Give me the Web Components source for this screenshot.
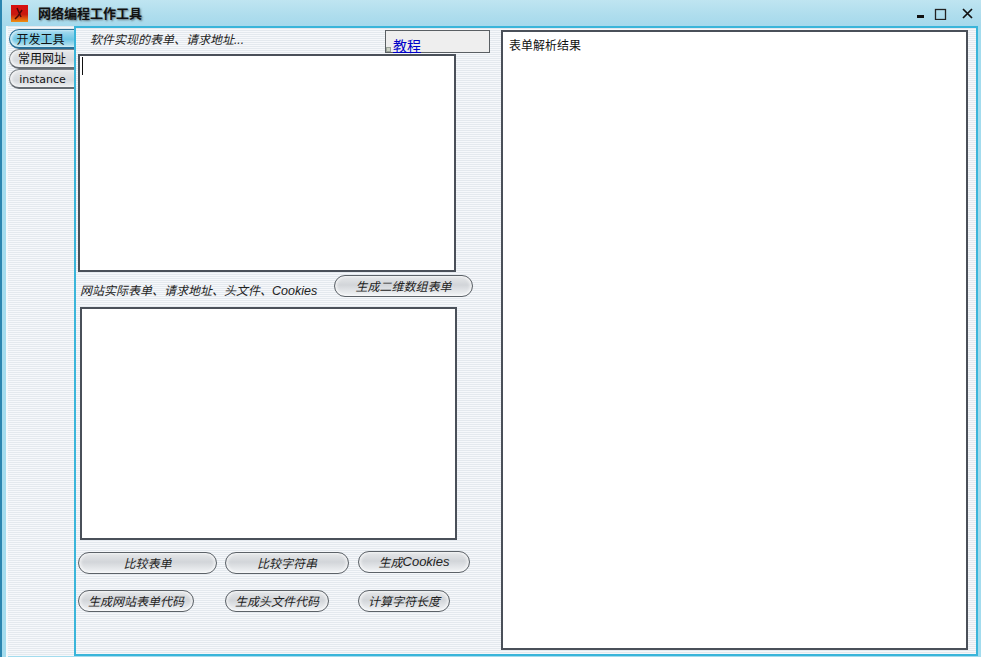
<!DOCTYPE html>
<html>
<head>
<meta charset="utf-8">
<title>网络编程工作工具</title>
<style>
    html, body { margin: 0; padding: 0; height: 100%; overflow: hidden; }
    body { font: 12px "Liberation Sans", "Noto Sans CJK SC", sans-serif; color: #111; }
</style>
</head>
<body>
<app-window>
    <title-bar slot="title">网络编程工作工具</title-bar>
    <side-tabs slot="tabs">
        <tab-item active>开发工具</tab-item>
        <tab-item>常用网址</tab-item>
        <tab-item latin>instance</tab-item>
    </side-tabs>
    <tool-panel slot="panel"></tool-panel>
</app-window>

<script>
class AppWindow extends HTMLElement {
    connectedCallback() {
        this.attachShadow({ mode: 'open' });
        this.shadowRoot.innerHTML = `
            <style>
                :host {
                    display: flex;
                    flex-direction: column;
                    width: 981px;
                    height: 657px;
                    box-sizing: border-box;
                    border-left: 2px solid #2b86b0;
                    background: repeating-linear-gradient(180deg, #e4e9ee 0, #e4e9ee 1px, #f6f8fb 1px, #f6f8fb 2px);
                }
                .body {
                    flex: 1;
                    display: flex;
                    min-height: 0;
                    padding: 0 3px 1px 7px;
                    box-shadow: inset 4px 0 0 #a3dcee, inset 6px 0 0 #f4f9fb, inset -3px 0 0 #a3dcee, inset 0 -1px 0 #a3dcee;
                }
                .tabs { width: 65px; flex: none; padding-top: 3px; }
                .panel { flex: 1; min-width: 0; }
            </style>
            <slot name="title"></slot>
            <div class="body">
                <div class="tabs"><slot name="tabs"></slot></div>
                <div class="panel"><slot name="panel"></slot></div>
            </div>
        `;
    }
}

class TitleBar extends HTMLElement {
    connectedCallback() {
        this.attachShadow({ mode: 'open' });
        this.shadowRoot.innerHTML = `
            <style>
                :host {
                    display: flex;
                    align-items: flex-start;
                    height: 26px;
                    flex: none;
                    padding: 0 6px 0 9px;
                    background: linear-gradient(180deg, #bfe5f1 0, #aedded 60%, #a6d9ec 100%);
                }
                .logo { width: 17px; height: 17px; flex: none; margin: 5px 10px 0 0; }
                .text {
                    flex: 1;
                    font: bold 13px/26px "Noto Sans CJK SC", sans-serif;
                    color: #111;
                    text-shadow: 1px 1px 2px #5d6d74;
                }
                .ctl { display: block; flex: none; width: 15px; height: 15px; margin-top: 5px; }
                .max { margin-left: 4px; }
                .close { margin-left: 12px; }
            </style>
            <svg class="logo" viewBox="0 0 17 17">
                <defs>
                    <linearGradient id="lg" x1="0" y1="0" x2="0" y2="1">
                        <stop offset="0" stop-color="#d81010"/>
                        <stop offset="0.55" stop-color="#c81a10"/>
                        <stop offset="1" stop-color="#f09010"/>
                    </linearGradient>
                </defs>
                <rect width="17" height="17" fill="url(#lg)"/>
                <path d="M6 3 L10 12 M11 5 L7 11 L4 14" stroke="#4a0a0a" stroke-width="1.5" fill="none"/>
            </svg>
            <span class="text"><slot></slot></span>
            <svg class="ctl" viewBox="0 0 15 15"><rect x="3" y="10" width="7" height="3" fill="#111"/></svg>
            <svg class="ctl max" viewBox="0 0 15 15"><rect x="2.5" y="4.5" width="10" height="10" fill="none" stroke="#222" stroke-width="1.3"/></svg>
            <svg class="ctl close" viewBox="0 0 15 15"><path d="M3 4 L12 13 M12 4 L3 13" stroke="#111" stroke-width="1.7"/></svg>
        `;
    }
}

class SideTabs extends HTMLElement {
    connectedCallback() {
        this.attachShadow({ mode: 'open' });
        this.shadowRoot.innerHTML = `
            <style>
                :host { display: flex; flex-direction: column; }
            </style>
            <slot></slot>
        `;
    }
}

class TabItem extends HTMLElement {
    connectedCallback() {
        this.attachShadow({ mode: 'open' });
        this.shadowRoot.innerHTML = `
            <style>
                :host {
                    display: flex;
                    align-items: center;
                    justify-content: center;
                    box-sizing: border-box;
                    height: 20px;
                    padding-bottom: 2px;
                    border: 1px solid #7a8086;
                    border-bottom: 2px solid #666c72;
                    border-right: none;
                    border-radius: 10px 0 0 10px;
                    font-size: 12px;
                    color: #111;
                    background: linear-gradient(180deg, #e6e8ea 0, #d6d9dd 60%, #eceef0 100%);
                    box-shadow: inset 2px 0 3px rgba(255,255,255,.7);
                }
                :host([active]) {
                    border-color: #2a6f96;
                    padding: 0 3px 0 0;
                    background: linear-gradient(180deg, #a9dcf0 0, #6fc6e4 55%, #bfe6f2 100%);
                }
                :host([latin]) { font-family: "DejaVu Sans", sans-serif; font-size: 11px; padding: 1px 0 0 1px; }
            </style>
            <slot></slot>
        `;
    }
}

class PillButton extends HTMLElement {
    connectedCallback() {
        this.attachShadow({ mode: 'open' });
        this.shadowRoot.innerHTML = `
            <style>
                :host {
                    display: flex;
                    align-items: center;
                    justify-content: center;
                    box-sizing: border-box;
                    flex: none;
                    height: 22px;
                    padding-bottom: 2px;
                    border: 1px solid #5c6268;
                    border-radius: 11px;
                    font-style: italic;
                    font-size: 12px;
                    white-space: nowrap;
                    color: #222;
                    background: linear-gradient(180deg, #e6e8ea 0, #d2d5d9 45%, #f2f4f6 100%);
                    box-shadow: inset 2px 0 3px rgba(255,255,255,.6), inset -2px 0 3px rgba(255,255,255,.6);
                }
            </style>
            <slot></slot>
        `;
    }
}

class TextBox extends HTMLElement {
    connectedCallback() {
        this.attachShadow({ mode: 'open' });
        this.shadowRoot.innerHTML = `
            <style>
                :host {
                    display: block;
                    box-sizing: border-box;
                    border: 2px solid #4a5059;
                    background: #fff;
                    padding: 6px;
                    font-size: 12px;
                    line-height: 16px;
                    color: #111;
                }
                :host([caret])::before {
                    content: "";
                    display: block;
                    width: 1px;
                    height: 18px;
                    margin: -5px 0 0 -4px;
                    background: #111;
                }
            </style>
            <slot></slot>
        `;
    }
}

class TutorialBox extends HTMLElement {
    connectedCallback() {
        this.attachShadow({ mode: 'open' });
        this.shadowRoot.innerHTML = `
            <style>
                :host {
                    display: flex;
                    align-items: flex-end;
                    box-sizing: border-box;
                    flex: none;
                    width: 105px;
                    height: 23px;
                    border: 1px solid #5a5f63;
                    background: #eeeeee;
                }
                .broken { width: 5px; height: 5px; margin: 0 2px 0 0; background: #cdd3c6; border: 1px solid #9aa29a; box-sizing: border-box; }
                a {
                    font-size: 14px;
                    line-height: 14px;
                    color: #0000c8;
                    text-decoration: underline;
                    margin-bottom: -1px;
                }
            </style>
            <span class="broken"></span><a href="#"><slot></slot></a>
        `;
    }
}

class ToolPanel extends HTMLElement {
    connectedCallback() {
        this.attachShadow({ mode: 'open' });
        this.shadowRoot.innerHTML = `
            <style>
                :host {
                    display: grid;
                    grid-template-columns: 425px 1fr;
                    box-sizing: border-box;
                    height: 630px;
                    border: 2px solid #3ab5da;
                    padding: 2px 8px 3px 2px;
                }
                .left { display: flex; flex-direction: column; min-width: 0; }
                .head { display: flex; height: 24px; flex: none; }
                .head .cap { margin: 2px 0 0 12px; width: 295px; font-style: italic; font-size: 12px; line-height: 16px; color: #222; }
                .src { height: 218px; width: 378px; flex: none; }
                .mid { display: flex; height: 35px; flex: none; }
                .mid .cap { width: 254px; margin: 11px 0 0 2px; font-style: italic; font-size: 12px; line-height: 16px; color: #222; white-space: nowrap; }
                .mid .cap span { font-size: 12.5px; }
                .mid pill-button { width: 139px; margin-top: 3px; }
                .dst { height: 233px; width: 377px; flex: none; margin-left: 2px; }
                .row { display: flex; height: 22px; flex: none; }
                .r1 { margin-top: 12px; }
                .r2 { margin-top: 16px; }
                .right { height: 620px; margin-left: -2px; }
            </style>
            <div class="left">
                <div class="head">
                    <span class="cap">软件实现的表单、请求地址...</span>
                    <tutorial-box>教程</tutorial-box>
                </div>
                <text-box class="src" caret></text-box>
                <div class="mid">
                    <span class="cap">网站实际表单、请求地址、头文件、<span>Cookies</span></span>
                    <pill-button>生成二维数组表单</pill-button>
                </div>
                <text-box class="dst"></text-box>
                <div class="row r1">
                    <pill-button style="width:139px;margin-right:8px">比较表单</pill-button>
                    <pill-button style="width:124px;margin-right:9px">比较字符串</pill-button>
                    <pill-button style="width:112px;margin-top:-1px">生成<span style="font-size:13px">Cookies</span></pill-button>
                </div>
                <div class="row r2">
                    <pill-button style="width:116px;margin-right:31px">生成网站表单代码</pill-button>
                    <pill-button style="width:104px;margin-right:29px">生成头文件代码</pill-button>
                    <pill-button style="width:92px">计算字符长度</pill-button>
                </div>
            </div>
            <text-box class="right">表单解析结果</text-box>
        `;
    }
}

customElements.define('app-window', AppWindow);
customElements.define('title-bar', TitleBar);
customElements.define('side-tabs', SideTabs);
customElements.define('tab-item', TabItem);
customElements.define('pill-button', PillButton);
customElements.define('text-box', TextBox);
customElements.define('tutorial-box', TutorialBox);
customElements.define('tool-panel', ToolPanel);
</script>
</body>
</html>
